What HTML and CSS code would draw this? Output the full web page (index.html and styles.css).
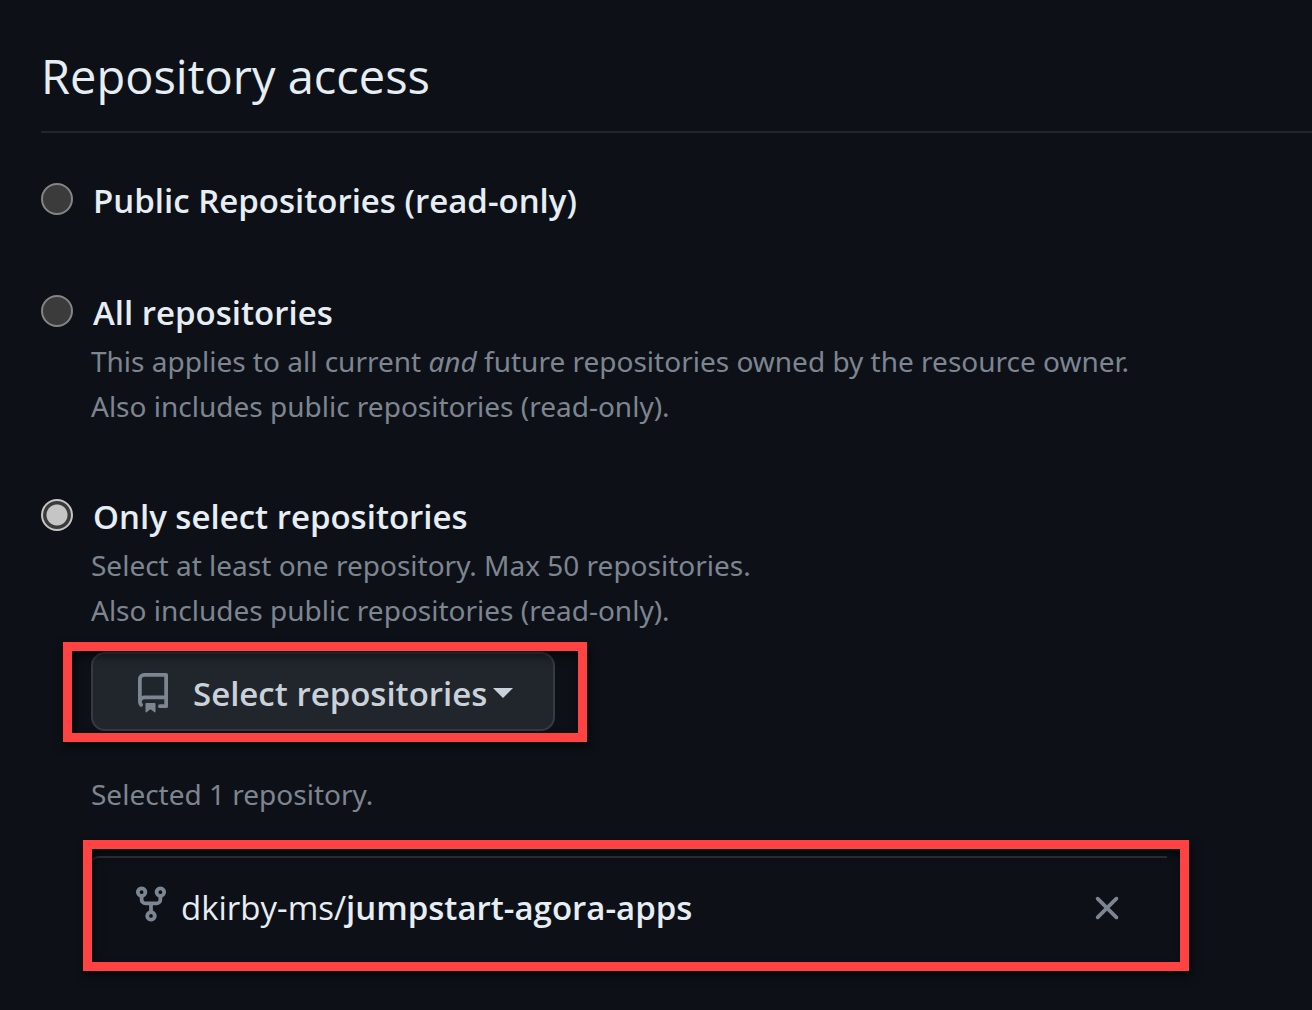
FILE: index.html
```html
<!DOCTYPE html>
<html lang="en">
<head>
<meta charset="utf-8">
<meta name="viewport" content="width=device-width, initial-scale=1">
<title>Repository access</title>
<link rel="stylesheet" href="styles.css">
</head>
<body>
<main class="page">
  <h1 class="title">Repository access</h1>
  <form class="options">
    <div class="option">
      <input class="radio" type="radio" name="access" id="access-public">
      <label class="option-label" for="access-public">Public Repositories (read-only)</label>
    </div>
    <div class="option">
      <input class="radio" type="radio" name="access" id="access-all">
      <label class="option-label" for="access-all">All repositories</label>
      <p class="note">This applies to all current <em>and</em> future repositories owned by the resource owner.<br>Also includes public repositories (read-only).</p>
    </div>
    <div class="option">
      <input class="radio" type="radio" name="access" id="access-select" checked>
      <label class="option-label" for="access-select">Only select repositories</label>
      <p class="note">Select at least one repository. Max 50 repositories.<br>Also includes public repositories (read-only).</p>
      <div class="picker">
        <div class="callout callout-button">
          <button class="select-button" type="button">
            <svg class="icon" viewBox="0 0 16 16" aria-hidden="true"><path d="M2 2.5A2.5 2.5 0 0 1 4.5 0h8.75a.75.75 0 0 1 .75.75v12.5a.75.75 0 0 1-.75.75h-2.5a.75.75 0 0 1 0-1.5h1.75v-2h-8a1 1 0 0 0-.714 1.7.75.75 0 1 1-1.072 1.05A2.495 2.495 0 0 1 2 11.5Zm10.5-1h-8a1 1 0 0 0-1 1v6.708A2.486 2.486 0 0 1 4.5 9h8ZM5 12.25a.25.25 0 0 1 .25-.25h3.5a.25.25 0 0 1 .25.25v3.25a.25.25 0 0 1-.4.2l-1.45-1.087a.249.249 0 0 0-.3 0L5.4 15.7a.25.25 0 0 1-.4-.2Z"/></svg>
            <span class="select-text">Select repositories</span>
            <span class="caret"></span>
          </button>
        </div>
        <p class="selected">Selected 1 repository.</p>
        <div class="callout callout-list">
          <ul class="repos">
            <li class="repo">
              <svg class="icon icon-fork" viewBox="0 0 16 16" aria-hidden="true"><path d="M5 5.372v.878c0 .414.336.75.75.75h4.5a.75.75 0 0 0 .75-.75v-.878a2.25 2.25 0 1 1 1.5 0v.878a2.25 2.25 0 0 1-2.25 2.25h-1.5v2.128a2.251 2.251 0 1 1-1.5 0V8.5h-1.5A2.25 2.25 0 0 1 3.5 6.25v-.878a2.25 2.25 0 1 1 1.5 0ZM5 3.25a.75.75 0 1 0-1.5 0 .75.75 0 0 0 1.5 0Zm6.75.75a.75.75 0 1 0 0-1.5.75.75 0 0 0 0 1.5Zm-3 8.75a.75.75 0 1 0-1.5 0 .75.75 0 0 0 1.5 0Z"/></svg>
              <span class="repo-name">dkirby-ms/<strong>jumpstart-agora-apps</strong></span>
              <button class="remove" type="button" aria-label="Remove repository">
                <svg class="icon" viewBox="0 0 16 16" aria-hidden="true"><path d="M3.72 3.72a.75.75 0 0 1 1.06 0L8 6.94l3.22-3.22a.749.749 0 0 1 1.275.326.749.749 0 0 1-.215.734L9.06 8l3.22 3.22a.749.749 0 0 1-.326 1.275.749.749 0 0 1-.734-.215L8 9.06l-3.22 3.22a.751.751 0 0 1-1.042-.018.751.751 0 0 1-.018-1.042L6.94 8 3.72 4.78a.75.75 0 0 1 0-1.06Z"/></svg>
              </button>
            </li>
          </ul>
        </div>
      </div>
    </div>
  </form>
</main>
</body>
</html>
```
FILE: styles.css
```css
* { box-sizing: border-box; }

body {
  margin: 0;
  background: #0d1117;
  color: #e6edf3;
  font-family: "Open Sans", "Segoe UI", sans-serif;
}

p, ul { margin: 0; padding: 0; }

.page { padding: 40px 0 40px 41px; }

.title {
  margin: 0;
  padding-bottom: 19px;
  border-bottom: 2px solid #21262d;
  font-size: 47px;
  font-weight: 400;
  line-height: 72px;
}

.options {
  display: flex;
  flex-direction: column;
  gap: 64px;
  padding-top: 44px;
}

.option {
  display: grid;
  grid-template-columns: 32px minmax(0, 1fr);
  column-gap: 18px;
}

.radio {
  appearance: none;
  width: 32px;
  height: 32px;
  margin: 6px 0 0;
  border: 2px solid #858585;
  border-radius: 50%;
  background: #3b3b3b;
}

.radio:checked {
  border-color: #c5c5c5;
  background: radial-gradient(circle, #c5c5c5 10px, #3b3b3b 11px);
}

.option-label {
  justify-self: start;
  padding-left: 2px;
  font-size: 33px;
  font-weight: 600;
  line-height: 48px;
}

.note, .selected {
  color: #7d8590;
  font-family: "Noto Sans", "Segoe UI", sans-serif;
  font-size: 28px;
  line-height: 45px;
}

.note {
  grid-column: 2;
  padding-top: 2px;
}

.picker {
  grid-column: 2;
  padding: 19px 145px 0 0;
}

.icon {
  flex: none;
  width: 40px;
  height: 40px;
  fill: #7d8590;
}

/* Red frames drawn over the control that they point out */
.callout { position: relative; }

.callout::after {
  content: "";
  position: absolute;
  border: 9px solid #ff4343;
  filter: drop-shadow(2px 5px 5px #000000aa);
  pointer-events: none;
}

.callout-button { width: fit-content; }
.callout-button::after { inset: -10px -32px -11px -28px; }
.callout-list::after { inset: -16px -22px -14px -8px; }

.select-button {
  display: flex;
  align-items: center;
  height: 79px;
  padding: 3px 40px 0;
  border: 2px solid #363b42;
  border-radius: 14px;
  background: #21262d;
  color: #c9d1d9;
  font: inherit;
  font-size: 33px;
  font-weight: 600;
}

.select-text { margin: 0 6px 0 20px; }

.caret {
  border: 10px solid transparent;
  border-top-color: #c9d1d9;
  border-bottom: 0;
}

.selected { padding-top: 41px; }

.repos {
  margin-top: 39px;
  border-top: 2px solid #30363d;
  border-radius: 8px 0 0 0;
  list-style: none;
}

.repo {
  display: flex;
  align-items: center;
  gap: 10px;
  height: 99px;
  padding: 0 40px;
}

.icon-fork { margin-bottom: 8px; }

.repo-name {
  flex: 1;
  font-size: 33px;
  line-height: 48px;
}

.repo-name strong { font-weight: 600; }

.remove {
  display: flex;
  padding: 0;
  border: 0;
  background: none;
}
```
